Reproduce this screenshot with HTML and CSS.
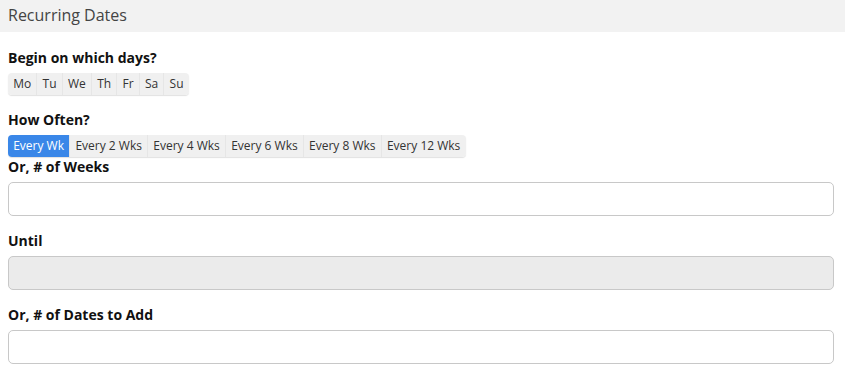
FILE: index.html
```html
<!DOCTYPE html>
<html>
<head>
<meta charset="utf-8">
<link rel="stylesheet" href="styles.css">
</head>
<body>
<div class="panel">
  <div class="panel-heading">Recurring Dates</div>
  <div class="panel-body">
    <div class="group days">
      <div class="label">Begin on which days?</div>
      <div class="btn-group">
        <span class="btn">Mo</span><span class="btn">Tu</span><span class="btn">We</span><span class="btn">Th</span><span class="btn">Fr</span><span class="btn">Sa</span><span class="btn">Su</span>
      </div>
    </div>
    <div class="group tight">
      <div class="label">How Often?</div>
      <div class="btn-group">
        <span class="btn active">Every Wk</span><span class="btn">Every 2 Wks</span><span class="btn">Every 4 Wks</span><span class="btn">Every 6 Wks</span><span class="btn">Every 8 Wks</span><span class="btn">Every 12 Wks</span>
      </div>
    </div>
    <div class="group">
      <div class="label">Or, # of Weeks</div>
      <input class="input" type="text">
    </div>
    <div class="group">
      <div class="label">Until</div>
      <input class="input" type="text" disabled>
    </div>
    <div class="group">
      <div class="label">Or, # of Dates to Add</div>
      <input class="input" type="text">
    </div>
  </div>
</div>
</body>
</html>
```
FILE: styles.css
```css
html, body {
  margin: 0;
  padding: 0;
  background: #fff;
  font-family: "Open Sans", "Noto Sans", sans-serif;
  color: #111;
}
.panel-heading {
  height: 32px;
  line-height: 30px;
  padding: 0 8px;
  background: #f2f2f2;
  color: #444;
  font-size: 16px;
}
.panel-body {
  padding: 16px 11px 0 8px;
}
.group {
  margin-bottom: 15px;
}
.group.days {
  margin-bottom: 15px;
}
.group.tight {
  margin-bottom: 0;
}
.label {
  font-size: 14px;
  font-weight: 700;
  line-height: 20px;
  margin-bottom: 5px;
}
.btn-group {
  display: flex;
  width: fit-content;
  margin-top: 2px;
  border-radius: 4px;
  box-shadow: 0 1px 1px rgba(0,0,0,0.12);
}
.btn {
  font-size: 12px;
  line-height: 22px;
  height: 22px;
  padding: 0 5.2px;
  background: #f0f0f0;
  color: #333;
  border-left: 1px solid #e6e6e6;
}
.btn:first-child {
  border-left: none;
  border-radius: 4px 0 0 4px;
}
.btn:last-child {
  border-radius: 0 4px 4px 0;
}
.btn.active {
  background: #3a87e8;
  color: #fff;
}
.input {
  display: block;
  box-sizing: border-box;
  width: 100%;
  height: 34px;
  margin: 0;
  border: 1px solid #c8c8c8;
  border-radius: 5px;
  background: #fff;
  font-family: inherit;
}
.input:disabled {
  background: #ebebeb;
}
```
